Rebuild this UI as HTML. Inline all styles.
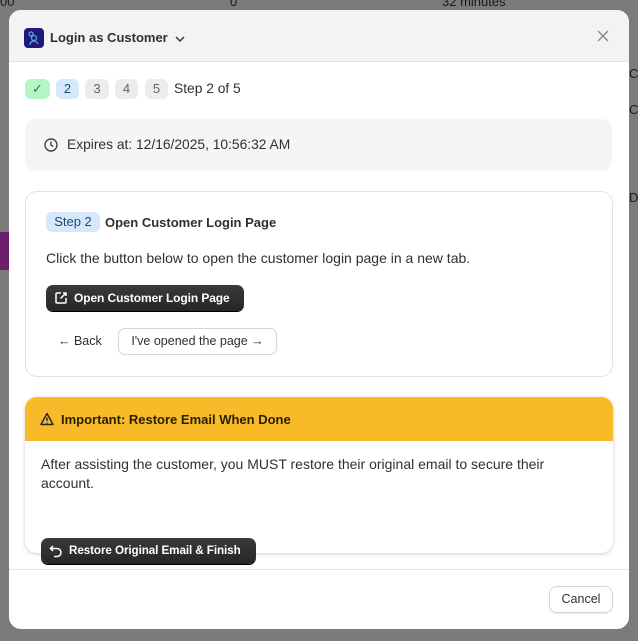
<!DOCTYPE html>
<html><head><style>
*{box-sizing:border-box;margin:0;padding:0}
body{width:638px;height:641px;background:#7b7b7b;font-family:"Liberation Sans",sans-serif;position:relative;overflow:hidden;color:#303030}
.bg{position:absolute;color:#1a1a1a;font-size:13px}
.modal{position:absolute;left:9px;top:10px;width:620px;height:619px;background:#fff;border-radius:12px;overflow:hidden}
.hdr{position:absolute;left:0;top:0;width:620px;height:52px;background:#f3f3f3;border-bottom:1px solid #e3e3e3}
.abs{position:absolute;white-space:nowrap}
.pill{position:absolute;top:69px;height:20px;border-radius:6px;font-size:13px;line-height:20px;text-align:center;background:#ececec;color:#666}
.btn{position:absolute;background:linear-gradient(#3a3a3a,#262626);color:#fff;font-weight:bold;font-size:12px;letter-spacing:-0.1px;border-radius:7px;line-height:26px;box-shadow:0 1px 0 #000;white-space:nowrap}
</style></head><body>
<div class="bg" style="left:0;top:-6px">00</div>
<div class="bg" style="left:230px;top:-6px">0</div>
<div class="bg" style="left:442px;top:-6px">32 minutes</div>
<div class="abs" style="left:0;top:232px;width:9px;height:38px;background:#6b1f6b"></div>
<div class="bg" style="left:629px;top:66px">Cu</div>
<div class="bg" style="left:629px;top:102px">Co</div>
<div class="bg" style="left:629px;top:190px">De</div>
<div class="modal">
 <div class="hdr">
  <div class="abs" style="left:15px;top:18px;width:20px;height:20px;background:#1f1a7a;border-radius:4px"><svg width="20" height="20"><circle cx="7" cy="6" r="2" fill="none" stroke="#5aa8e0" stroke-width="1.2"/><circle cx="10" cy="10" r="2.5" fill="none" stroke="#5aa8e0" stroke-width="1.2"/><path d="M6 17c0-3 2-4 4-4s3 1 4 3" fill="none" stroke="#5aa8e0" stroke-width="1.2"/></svg></div>
  <div class="abs" style="left:41px;top:20px;font-size:13px;font-weight:bold;color:#303030">Login as Customer</div>
  <svg class="abs" style="left:165px;top:23px" width="12" height="12"><path d="M2 4l4 4 4-4" fill="none" stroke="#333" stroke-width="1.5"/></svg>
  <svg class="abs" style="left:587px;top:19px" width="14" height="14"><path d="M2 2l10 10M12 2L2 12" stroke="#888" stroke-width="1.4"/></svg>
 </div>
 <div class="pill" style="left:16px;width:25px;background:#b5f5c4;color:#2a7a3a">✓</div>
 <div class="pill" style="left:47px;width:23px;background:#d6e9fb;color:#1d4a7a">2</div>
 <div class="pill" style="left:76px;width:24px">3</div>
 <div class="pill" style="left:106px;width:23px">4</div>
 <div class="pill" style="left:136px;width:23px">5</div>
 <div class="abs" style="left:165px;top:71px;font-size:13.8px">Step 2 of 5</div>
 <div class="abs" style="left:16px;top:109px;width:587px;height:52px;background:#f5f5f5;border-radius:10px"></div>
 <svg class="abs" style="left:35px;top:128px" width="14" height="14"><circle cx="7" cy="7" r="6" fill="none" stroke="#444" stroke-width="1.4"/><path d="M7 3.5V7l2.2 1.5" fill="none" stroke="#444" stroke-width="1.4"/></svg>
 <div class="abs" style="left:58px;top:127px;font-size:13.8px">Expires at: 12/16/2025, 10:56:32 AM</div>
 <div class="abs" style="left:16px;top:181px;width:588px;height:186px;border:1px solid #e3e3e3;border-radius:12px"></div>
 <div class="abs" style="left:37px;top:202px;width:54px;height:20px;background:#d6e9fb;color:#1d4a7a;border-radius:6px;font-size:13px;line-height:20px;text-align:center">Step 2</div>
 <div class="abs" style="left:96px;top:205px;font-size:13px;font-weight:bold;color:#303030">Open Customer Login Page</div>
 <div class="abs" style="left:37px;top:240px;font-size:14px">Click the button below to open the customer login page in a new tab.</div>
 <div class="btn" style="left:37px;top:275px;width:198px;padding-left:28px">Open Customer Login Page</div>
 <svg class="abs" style="left:45px;top:281px" width="14" height="14"><path d="M7 2H3a1 1 0 0 0-1 1v8a1 1 0 0 0 1 1h8a1 1 0 0 0 1-1V7M9 2h3v3M12 2L6.5 7.5" fill="none" stroke="#fff" stroke-width="1.5"/></svg>
 <div class="abs" style="left:49px;top:324px;font-size:12.5px">← Back</div>
 <div class="abs" style="left:109px;top:318px;width:159px;height:27px;border:1px solid #d6d6d6;border-radius:7px;font-size:12.5px;line-height:25px;text-align:center">I've opened the page →</div>
 <div class="abs" style="left:16px;top:387px;width:588px;height:156px;border-radius:12px;box-shadow:0 1px 4px rgba(0,0,0,.2);overflow:hidden">
  <div style="height:44px;background:#f8ba28"></div>
 </div>
 <svg class="abs" style="left:31px;top:402px" width="14" height="14"><path d="M7 1.5L13 12.5H1z" fill="none" stroke="#222" stroke-width="1.4" stroke-linejoin="round"/><path d="M7 5.5v3.5M7 10.5v1" stroke="#222" stroke-width="1.4"/></svg>
 <div class="abs" style="left:52px;top:402px;font-size:13px;font-weight:bold;color:#2a2000">Important: Restore Email When Done</div>
 <div class="abs" style="left:32px;top:445px;width:540px;font-size:14px;line-height:19px;white-space:normal">After assisting the customer, you MUST restore their original email to secure their account.</div>
 <div class="btn" style="left:32px;top:528px;width:215px;padding-left:28px;font-size:11.7px">Restore Original Email &amp; Finish</div>
 <svg class="abs" style="left:40px;top:534px" width="14" height="14"><path d="M4 2L1.5 4.5 4 7M1.5 4.5H8a4 4 0 0 1 0 8H5" fill="none" stroke="#fff" stroke-width="1.5"/></svg>
 <div class="abs" style="left:0;top:559px;width:620px;height:1px;background:#e6e6e6"></div>
 <div class="abs" style="left:540px;top:576px;width:64px;height:27px;border:1px solid #d6d6d6;border-radius:8px;font-size:12.5px;line-height:25px;text-align:center;box-shadow:0 1px 1px rgba(0,0,0,.08)">Cancel</div>
</div>
</body></html>
